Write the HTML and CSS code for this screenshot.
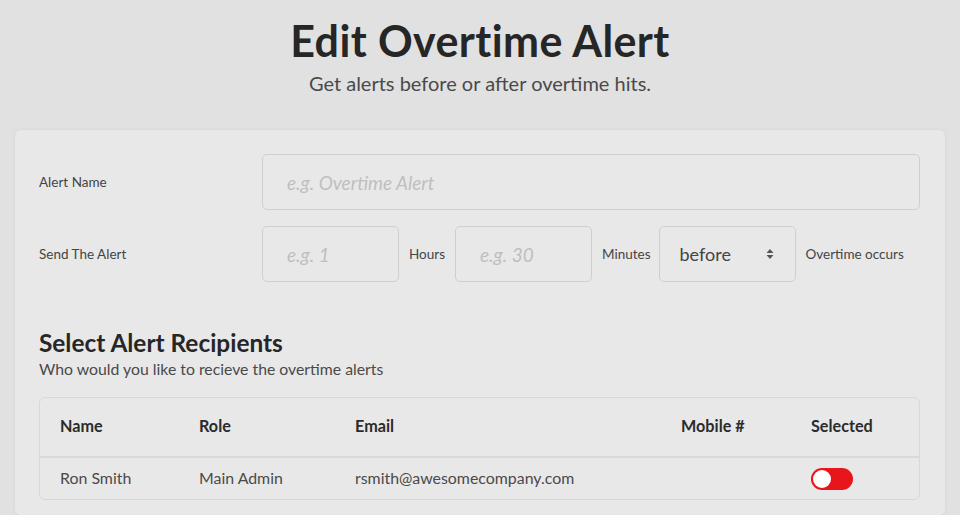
FILE: index.html
```html
<!DOCTYPE html>
<html lang="en">
<head>
<meta charset="utf-8">
<title>Edit Overtime Alert</title>
<link rel="stylesheet" href="styles.css">
</head>
<body>
<header class="page-head">
  <h1 class="title">Edit Overtime Alert</h1>
  <p class="subtitle">Get alerts before or after overtime hits.</p>
</header>
<main class="card">
  <div class="form-row">
    <label class="label">Alert Name</label>
    <div class="input wide"><span class="ph">e.g. Overtime Alert</span></div>
  </div>
  <div class="form-row">
    <label class="label">Send The Alert</label>
    <div class="controls">
      <div class="input small"><span class="ph">e.g. 1</span></div>
      <span class="unit">Hours</span>
      <div class="input small"><span class="ph">e.g. 30</span></div>
      <span class="unit tight">Minutes</span>
      <div class="input small select">
        <span class="sel-val">before</span>
        <svg class="arrows" width="8" height="12" viewBox="0 0 8 12"><path d="M4 1 L7.5 5 L0.5 5 Z M4 11 L7.5 7 L0.5 7 Z" fill="#555"/></svg>
      </div>
      <span class="unit">Overtime occurs</span>
    </div>
  </div>

  <section class="recipients">
    <h2 class="sec-title">Select Alert Recipients</h2>
    <p class="sec-sub">Who would you like to recieve the overtime alerts</p>
    <div class="table">
      <div class="tr th">
        <div>Name</div><div>Role</div><div>Email</div><div>Mobile #</div><div>Selected</div>
      </div>
      <div class="tr td">
        <div>Ron Smith</div><div>Main Admin</div><div>rsmith@awesomecompany.com</div><div></div>
        <div><span class="toggle"><span class="knob"></span></span></div>
      </div>
    </div>
  </section>
</main>
</body>
</html>
```

FILE: styles.css
```css
* { box-sizing: border-box; }
html, body { margin: 0; padding: 0; }
body {
  background: #e1e1e1;
  font-family: Lato, "Open Sans", "Liberation Sans", sans-serif;
  color: #2b2b2b;
  width: 960px;
  height: 515px;
  overflow: hidden;
}
.page-head {
  text-align: center;
  padding-top: 16px;
  height: 130px;
}
.title {
  margin: 0;
  font-size: 43px;
  line-height: 50px;
  font-weight: 700;
  color: #262626;
  letter-spacing: 0.4px;
}
.subtitle {
  margin: 5px 0 0;
  font-size: 20px;
  line-height: 24px;
  color: #4a4a4a;
}
.card {
  margin: 0 15px;
  background: #e8e8e8;
  border-radius: 6px;
  box-shadow: 0 0 4px rgba(0,0,0,0.06);
  padding: 24px 25px 0 24px;
  height: 385px;
  overflow: hidden;
}
.form-row {
  display: flex;
  align-items: center;
  margin-bottom: 16px;
}
.label {
  width: 223px;
  flex: none;
  font-size: 13.5px;
  color: #444;
}
.input {
  height: 56px;
  border: 1px solid #cfcfcf;
  border-radius: 5px;
  display: flex;
  align-items: center;
  padding-left: 24px;
}
.input.wide { flex: 1; }
.input.small { width: 137px; flex: none; }
.ph {
  font-style: italic;
  font-size: 19px;
  color: #bfbfbf;
}
.controls {
  display: flex;
  align-items: center;
}
.unit {
  font-size: 13.5px;
  color: #444;
  margin: 0 10px 0 10px;
}
.unit.tight { margin-right: 8px; }
.select {
  padding-left: 20px;
  padding-right: 21px;
  justify-content: space-between;
}
.sel-val {
  font-size: 18px;
  color: #444;
}
.recipients {
  padding-top: 31px;
}
.sec-title {
  margin: 0;
  font-size: 24.4px;
  line-height: 28px;
  font-weight: 700;
  color: #262626;
}
.sec-sub {
  margin: 2px 0 0;
  font-size: 15.8px;
  line-height: 20px;
  color: #4a4a4a;
}
.table {
  margin-top: 18px;
  border: 1px solid #d8d8d8;
  border-radius: 6px;
}
.tr {
  display: grid;
  grid-template-columns: 139px 156px 326px 130px 1fr;
  align-items: center;
  padding-left: 20px;
}
.th {
  height: 60px;
  border-bottom: 2px solid #d9d9d9;
  font-weight: 700;
  font-size: 16.2px;
  color: #2b2b2b;
  padding-bottom: 4px;
}
.td {
  height: 41px;
  font-size: 15.9px;
  color: #4a4a4a;
  padding-bottom: 3px;
}
.toggle {
  display: block;
  width: 42px;
  height: 22px;
  border-radius: 11px;
  background: #e8151b;
  position: relative;
  margin-top: 3px;
}
.knob {
  position: absolute;
  left: 2px;
  top: 2px;
  width: 18px;
  height: 18px;
  border-radius: 50%;
  background: #fff;
}
```
